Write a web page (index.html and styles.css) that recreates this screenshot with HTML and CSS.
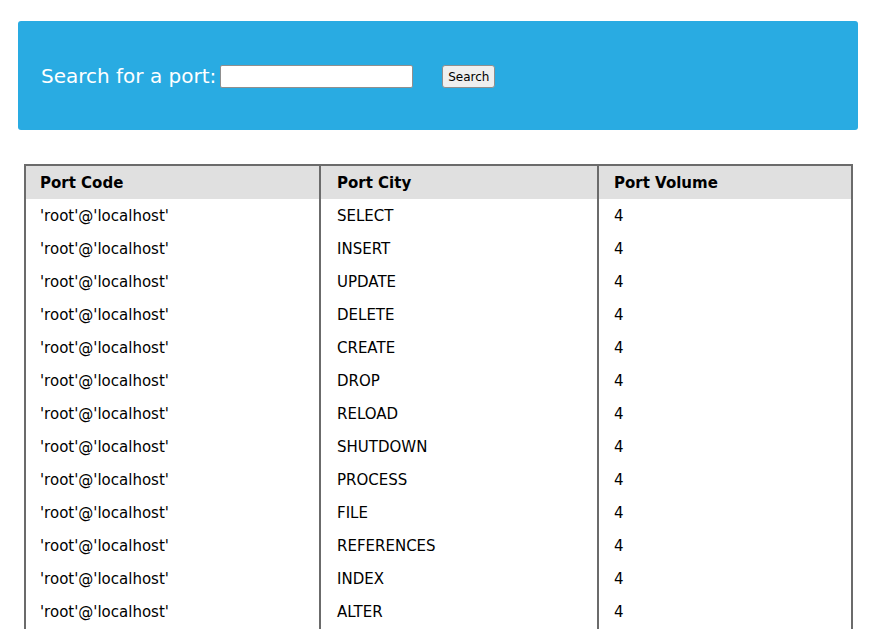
FILE: index.html
```html
<!DOCTYPE html>
<html>
<head>
<meta charset="utf-8">
<link rel="stylesheet" href="styles.css">
</head>
<body>
<div class="page">
  <form class="search-bar">
    <label class="search-label" for="q">Search for a port:</label>
    <input class="search-input" id="q" type="text">
    <button class="search-btn" type="button">Search</button>
  </form>
  <table class="ports">
    <thead>
      <tr><th class="c1">Port Code</th><th class="c2">Port City</th><th class="c3">Port Volume</th></tr>
    </thead>
    <tbody>
      <tr><td>'root'@'localhost'</td><td>SELECT</td><td class="vol">4</td></tr>
      <tr><td>'root'@'localhost'</td><td>INSERT</td><td class="vol">4</td></tr>
      <tr><td>'root'@'localhost'</td><td>UPDATE</td><td class="vol">4</td></tr>
      <tr><td>'root'@'localhost'</td><td>DELETE</td><td class="vol">4</td></tr>
      <tr><td>'root'@'localhost'</td><td>CREATE</td><td class="vol">4</td></tr>
      <tr><td>'root'@'localhost'</td><td>DROP</td><td class="vol">4</td></tr>
      <tr><td>'root'@'localhost'</td><td>RELOAD</td><td class="vol">4</td></tr>
      <tr><td>'root'@'localhost'</td><td>SHUTDOWN</td><td class="vol">4</td></tr>
      <tr><td>'root'@'localhost'</td><td>PROCESS</td><td class="vol">4</td></tr>
      <tr><td>'root'@'localhost'</td><td>FILE</td><td class="vol">4</td></tr>
      <tr><td>'root'@'localhost'</td><td>REFERENCES</td><td class="vol">4</td></tr>
      <tr><td>'root'@'localhost'</td><td>INDEX</td><td class="vol">4</td></tr>
      <tr><td>'root'@'localhost'</td><td>ALTER</td><td class="vol">4</td></tr>
      <tr><td>'root'@'localhost'</td><td>SHOW DATABASES</td><td class="vol">4</td></tr>
    </tbody>
  </table>
</div>
</body>
</html>
```

FILE: styles.css
```css
html, body {
  margin: 0;
  padding: 0;
  background: #ffffff;
  font-family: "DejaVu Sans", sans-serif;
  color: #000;
}
.page {
  padding: 21px 13px 0 18px;
}
.search-bar {
  margin: 0;
  height: 109px;
  background: #29abe2;
  border-radius: 3px;
  display: flex;
  align-items: center;
  padding: 0 0 0 23px;
  box-sizing: border-box;
}
.search-label {
  color: #ffffff;
  font-size: 20px;
  margin-right: 4px;
}
.search-input {
  width: 193px;
  height: 23px;
  box-sizing: border-box;
  border: 1px solid #8f8f8f;
  border-radius: 2px;
  background: #fff;
  margin: 2px 29px 0 0;
  padding: 0 2px;
}
.search-btn {
  width: 53px;
  height: 23px;
  box-sizing: border-box;
  padding: 0;
  font-family: "DejaVu Sans", sans-serif;
  font-size: 12px;
  color: #000;
  background: #efefef;
  border: 1px solid #8f8f8f;
  border-radius: 3px;
  margin-top: 2px;
}
.ports {
  margin: 34px 0 0 6px;
  border-collapse: collapse;
  border: 2px solid #6b6b6b;
  width: 829px;
  font-size: 15px;
}
.ports th, .ports td {
  text-align: left;
  padding: 8px 15px 6px 16px;
  line-height: 19px;
  border-left: 2px solid #6b6b6b;
  border-right: 2px solid #6b6b6b;
}
.ports th:first-child, .ports td:first-child {
  padding-left: 14px;
}
.ports th.c3, .ports td.vol {
  padding-left: 15px;
}
.ports th {
  background: #e0e0e0;
  font-weight: bold;
}
.c1 { width: 264px; }
.c2 { width: 245px; }
```
